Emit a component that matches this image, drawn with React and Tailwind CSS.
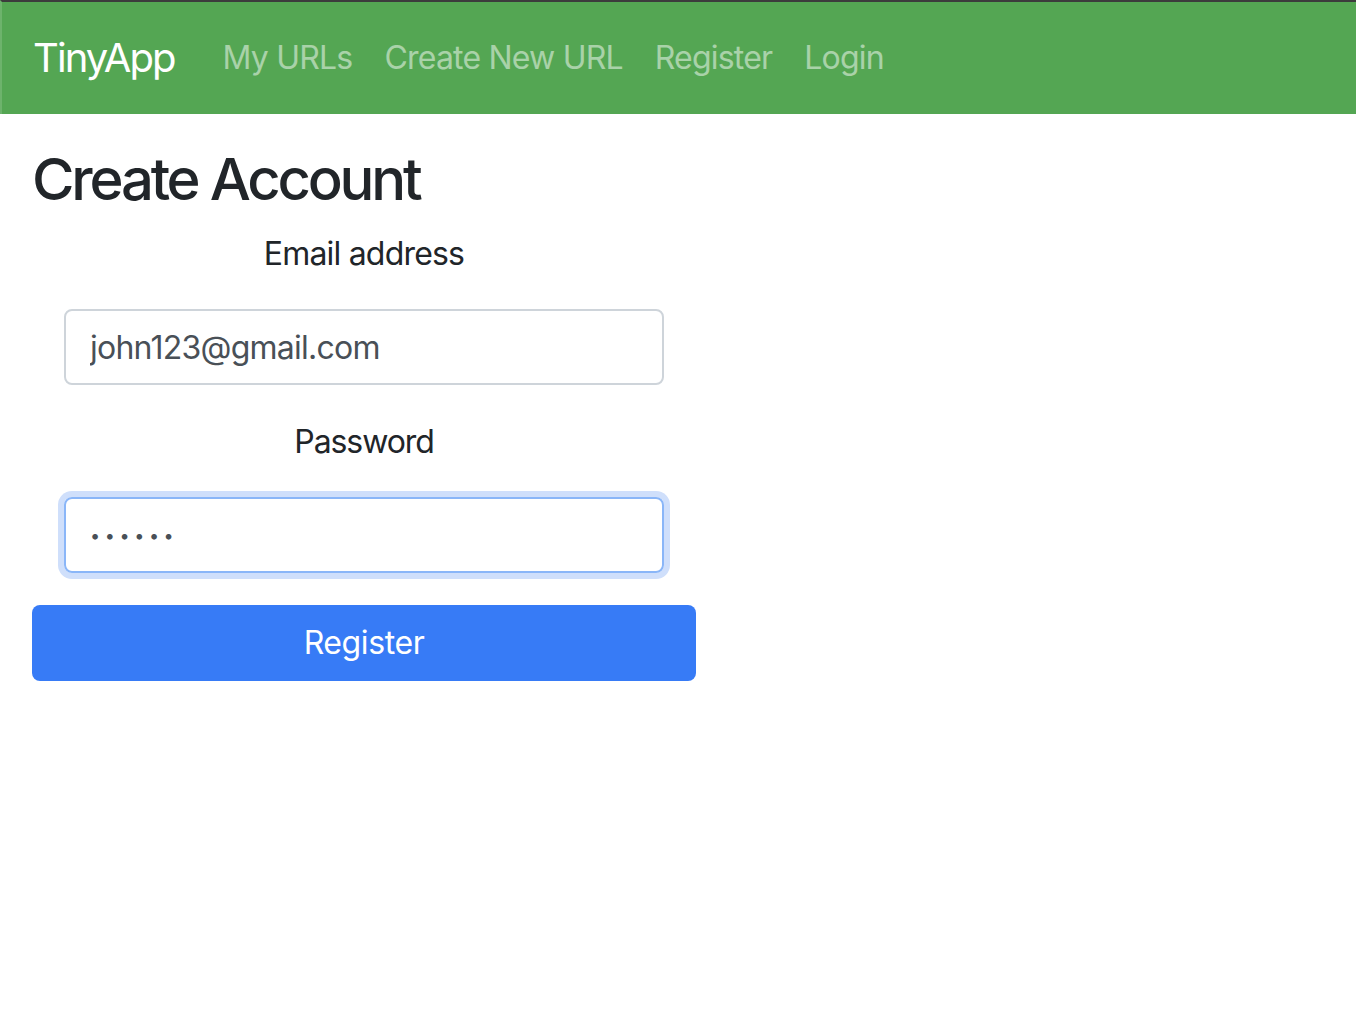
import React, { useState } from 'react';

const navLinks = ['My URLs', 'Create New URL', 'Register', 'Login'];

export default function App() {
    const [email, setEmail] = useState('john123@gmail.com');
    const [password, setPassword] = useState('123456');

    return (
        <div className="min-h-screen bg-white font-['Inter','Liberation_Sans',sans-serif] text-[#212529]">
            {/* Navbar */}
            <nav className="h-[114px] border-t-2 border-t-[#3c3c3c] border-l-2 border-l-[#6db36c] bg-[#54a653] flex items-center pl-[31px]">
                <a href="#" className="text-[40px] leading-[60px] text-white mr-[32px] tracking-[-1.9px]">TinyApp</a>
                <div className="flex items-center">
                    {navLinks.map((link) => (
                        <a key={link} href="#" className="px-4 text-[32px] leading-[48px] text-white/50 tracking-[-0.8px]">
                            {link}
                        </a>
                    ))}
                </div>
            </nav>

            {/* Content */}
            <main className="px-[32px] pt-[27px]">
                <h2 className="text-[58px] leading-[77px] font-medium tracking-[-3.2px]">Create Account</h2>

                <form className="w-[664px] mt-[12px]" onSubmit={(e) => e.preventDefault()}>
                    <div className="flex flex-col items-center">
                        <label htmlFor="email" className="text-[32px] leading-[48px] mb-[31px] tracking-[-0.8px]">Email address</label>
                        <input
                            id="email"
                            type="email"
                            value={email}
                            onChange={(e) => setEmail(e.target.value)}
                            className="w-[600px] h-[76px] px-[24px] border-2 border-[#ced4da] rounded-[8px] text-[32px] text-[#495057] outline-none tracking-[-0.75px]"
                        />
                    </div>

                    <div className="flex flex-col items-center mt-[33px]">
                        <label htmlFor="password" className="text-[32px] leading-[48px] mb-[31px] tracking-[-1.1px]">Password</label>
                        <input
                            id="password"
                            type="password"
                            value={password}
                            onChange={(e) => setPassword(e.target.value)}
                            className="w-[600px] h-[76px] px-[24px] border-2 border-[#8ab6f8] rounded-[8px] text-[18px] text-[#495057] tracking-[4.6px] outline-none shadow-[0_0_0_6px_#cfdffb]"
                        />
                    </div>

                    <button
                        type="submit"
                        className="w-full h-[76px] mt-[32px] rounded-[8px] bg-[#377bf6] text-white text-[32px] tracking-[-0.4px]"
                    >
                        Register
                    </button>
                </form>
            </main>
        </div>
    );
}
